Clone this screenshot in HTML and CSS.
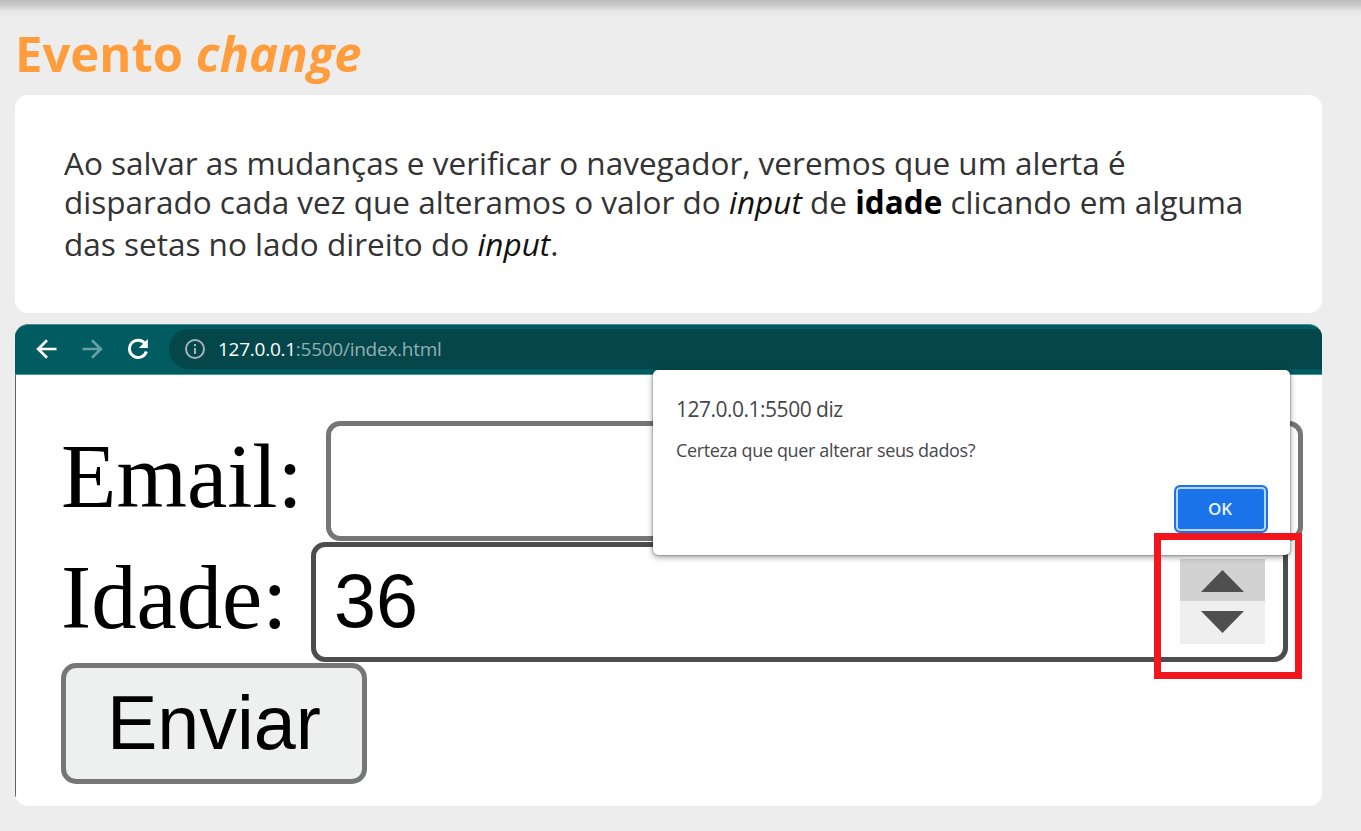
FILE: index.html
```html
<!DOCTYPE html>
<html lang="pt-BR">
<head>
<meta charset="utf-8">
<title>Evento change</title>
<link rel="stylesheet" href="styles.css">
</head>
<body>
<main class="page">
  <h1 class="title">Evento <em>change</em></h1>
  <section class="card">
    <p class="line line-1">Ao salvar as mudanças e verificar o navegador, veremos que um alerta é</p>
    <p class="line line-2">disparado cada vez que alteramos o valor do <em>input</em> de <strong>idade</strong> clicando em alguma</p>
    <p class="line line-3">das setas no lado direito do <em>input</em>.</p>
  </section>
  <section class="browser">
    <header class="toolbar">
      <svg class="nav" viewBox="0 0 22 22"><path d="M20.5 11H2.5M11 2.2 2.2 11l8.8 8.8"/></svg>
      <svg class="nav forward" viewBox="0 0 22 22"><path d="M1.500 11h18M11 2.200l8.800 8.800-8.800 8.800"/></svg>
      <svg class="nav reload" viewBox="0 0 22 22"><path d="M18 5.500A8.700 8.700 0 1 0 19.400 13.500"/><path class="tip" d="M20.800 1v9h-9z"/></svg>
      <div class="address">
        <svg class="info" viewBox="0 0 20 20"><circle cx="10" cy="10" r="9"/><path d="M10 9v6M10 5v2.200"/></svg>
        <span class="url"><b>127.0.0.1</b>:5500/index.html</span>
      </div>
    </header>
    <div class="viewport">
      <div class="row"><span class="label">Email:</span><span class="field email">&nbsp;</span></div>
      <div class="row"><span class="label">Idade:</span><span class="field age"><span class="value">36</span>
        <span class="spinner">
          <svg class="step up" viewBox="0 0 85 42"><path d="M42.500 11 64 33H21z"/></svg>
          <svg class="step" viewBox="0 0 85 43"><path d="M21 10h43L42.500 32z"/></svg>
        </span></span></div>
      <button class="submit">Enviar</button>
    </div>
    <div class="alert">
      <div class="alert-title">127.0.0.1:5500 diz</div>
      <div class="alert-text">Certeza que quer alterar seus dados?</div>
      <button class="ok">OK</button>
    </div>
    <div class="highlight"></div>
  </section>
</main>
</body>
</html>
```
FILE: styles.css
```css
* { box-sizing: border-box; }
body {
  margin: 0;
  height: 831px;
  overflow: hidden;
  background: linear-gradient(#bdbdbd, #c9c9c9 5px, #e6e6e6 11px, #ededed 16px) no-repeat #ededed;
  font-family: "Open Sans", sans-serif;
}
.page { width: 1322px; padding: 20px 0 0 15px; }
.title {
  margin: 0;
  height: 75px;
  font-size: 49px;
  line-height: 67px;
  font-weight: 700;
  color: #ff9c3c;
  white-space: nowrap;
}
.card {
  height: 218px;
  padding: 48px 49px 0;
  border-radius: 13px;
  background: #fff;
}
.line {
  margin: 0;
  height: 39px;
  font-size: 31.5px;
  line-height: 40px;
  font-weight: 400;
  color: #333;
  white-space: nowrap;
}
.line-2 { height: 42px; }
.line em { color: #111; }
.line strong { font-weight: 700; color: #000; }
.browser {
  position: relative;
  height: 482px;
  margin-top: 11px;
  border-radius: 13px;
  background: linear-gradient(#596668, #596668) no-repeat 0 0 / 1px 473px #fff;
}
.toolbar {
  display: flex;
  align-items: center;
  height: 51px;
  padding-left: 21px;
  border-radius: 13px 13px 0 0;
  border-top: 1px solid #4b898c;
  border-bottom: 1px solid #4b989b;
  background: #005c61;
  overflow: hidden;
}
.nav {
  width: 22px;
  height: 22px;
  margin-right: 23px;
  margin-top: -2px;
  fill: none;
  stroke: #fff;
  stroke-width: 2.7;
}
.nav.forward { stroke: #659fa3; }
.nav.reload { margin-right: 20px; margin-left: 1px; stroke-width: 3; }
.nav .tip { fill: #fff; stroke: none; }
.address {
  display: flex;
  align-items: center;
  flex: 1;
  height: 40px;
  margin-top: -2px;
  padding-left: 16px;
  border-radius: 20px 0 0 20px;
  background: #05464b;
}
.info { width: 20px; height: 20px; margin-right: 13px; fill: none; stroke: #a4b5b9; stroke-width: 2; }
.url { font-size: 19px; line-height: 26px; letter-spacing: -.26px; color: #90afb2; white-space: nowrap; }
.url b { font-weight: 500; color: #fff; }
.viewport { padding: 46px 0 0 47px; }
.row { display: flex; align-items: baseline; height: 121px; }
.label {
  position: relative;
  top: 1px;
  margin-left: -1px;
  margin-right: 23.5px;
  font: 90.67px/100px "Liberation Serif", serif;
  color: #000;
  white-space: nowrap;
}
.field {
  display: flex;
  justify-content: space-between;
  width: 977px;
  height: 120px;
  padding: 12px 18px 0 18px;
  border: 5.67px solid #767676;
  border-radius: 14px;
  font: 75.5px/85px "Liberation Sans", sans-serif;
  color: #000;
}
.field.age { border-color: #4d4d4d; }
.spinner { display: flex; flex-direction: column; width: 85px; height: 85px; background: #efefef; }
.step { width: 85px; height: 43px; fill: #4f4f4f; }
.step.up { height: 42px; background: #d2d2d2; }
.submit {
  display: block;
  width: 306px;
  height: 121px;
  margin-left: -1px;
  padding: 0;
  border: 5.67px solid #767676;
  border-radius: 15px;
  background: #eeefef;
  font: 75.5px/85px "Liberation Sans", sans-serif;
  color: #000;
}
.alert {
  position: absolute;
  left: 638px;
  top: 46px;
  width: 637px;
  height: 185px;
  padding: 25px 22px 0 23px;
  border-radius: 5px;
  background: #fff;
  box-shadow: 0 2px 6px rgba(0, 0, 0, .4), 0 0 2px rgba(0, 0, 0, .55);
  color: #45474b;
}
.alert-title { height: 42px; font-size: 21px; line-height: 29px; letter-spacing: -.5px; white-space: nowrap; }
.alert-text { height: 48px; font-size: 18px; line-height: 26px; letter-spacing: -.36px; white-space: nowrap; }
.ok {
  display: block;
  width: 94px;
  height: 48px;
  margin-left: auto;
  padding: 0 2px 1px 0;
  border: 2.500px solid #1a73e8;
  border-radius: 6px;
  box-shadow: inset 0 0 0 2px #b8d5fa;
  background: #1a73e8;
  font: 600 17px/24px "Open Sans", sans-serif;
  color: #e8f1fd;
}
.highlight {
  position: absolute;
  left: 1139px;
  top: 209px;
  width: 148px;
  height: 146px;
  border: 7px solid #f2151d;
}
```
